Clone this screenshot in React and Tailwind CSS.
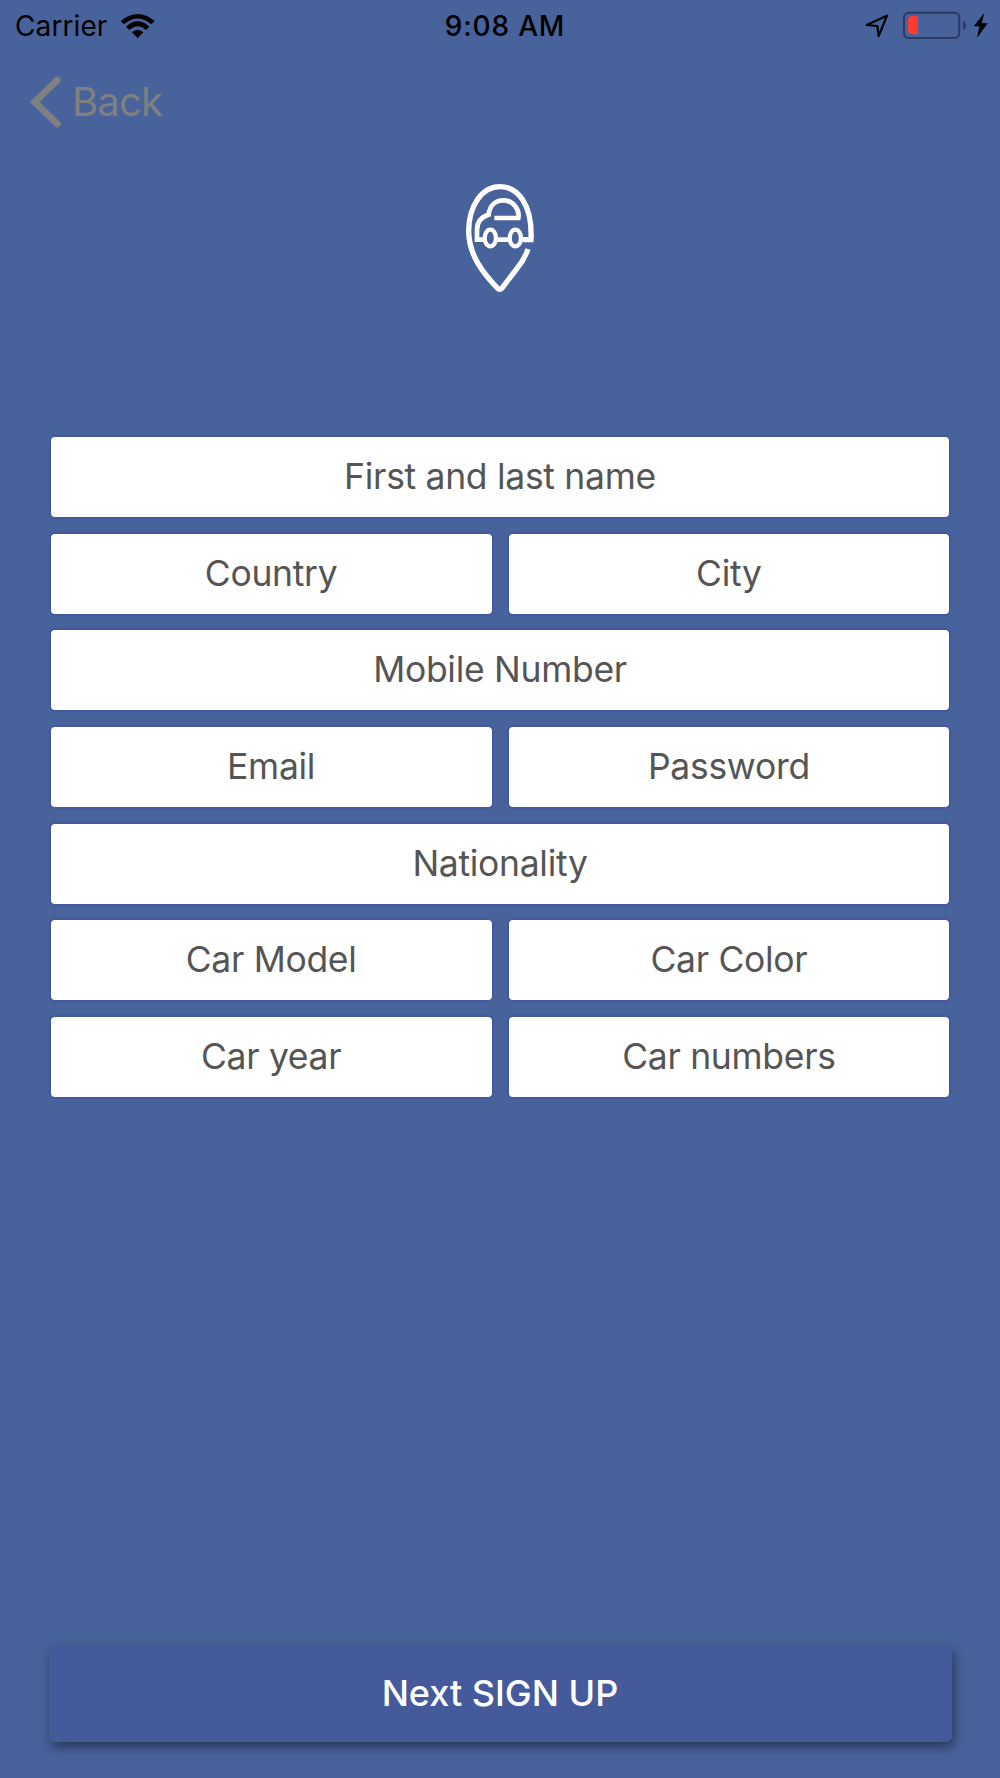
import { useState } from "react";

const rows = [
  ["First and last name"],
  ["Country", "City"],
  ["Mobile Number"],
  ["Email", "Password"],
  ["Nationality"],
  ["Car Model", "Car Color"],
  ["Car year", "Car numbers"],
];

function StatusBar() {
  return (
    <div className="h-[50px] grid grid-cols-3 items-center text-[28px] leading-[50px] text-black">
      <div className="flex items-center pl-[15px]">
        <span className="w-[93px] pt-px tracking-[0.1px] whitespace-nowrap">Carrier</span>
        <svg className="ml-[12px] w-[36px] h-[26px]" viewBox="0 0 108 78">
          <path d="M2 24 Q53 -18 104 24 L94 34 Q53 -1 12 34 Z" />
          <path d="M18 41 Q53 9 88 41 L78 51 Q53 28 28 51 Z" />
          <path d="M36 58 Q53 44 70 58 L53 75 Z" />
        </svg>
      </div>
      <div className="text-center font-medium whitespace-nowrap pl-[10px] pt-px tracking-[0.8px]">9:08 AM</div>
      <div className="flex items-center justify-end pr-[9px]">
        <svg className="w-[126px] h-[50px]" viewBox="75 0 378 150">
          <path d="M80 72 L141 44 L116 105 L112 75 Z" fill="none" stroke="#000" strokeWidth="6.5" strokeLinejoin="round" />
          <rect x="192" y="35" width="166" height="76" rx="14" fill="none" stroke="#2c3b5f" strokeWidth="6" />
          <path d="M217 45 H234 V100 H217 Q204 100 204 87 V58 Q204 45 217 45 Z" fill="#ff3b30" />
          <path d="M369 58 Q378 63 378 73 Q378 83 369 88 Z" fill="#2c3b5f" />
          <path d="M433 36 L401 76 L418 76 L411 111 L443 67 L425 67 Z" />
        </svg>
      </div>
    </div>
  );
}

function Logo() {
  return (
    <svg className="w-[100px] h-[130px] mx-auto" viewBox="0 0 300 390" fill="none" stroke="#fff">
      <path
        d="M234 237 C227 258 214 280 199 298 L156 354 Q149 362 142 354 C104 315 56 258 56 182 C57 105 97 50 150 50 C204 50 248 105 243 209 L218 209"
        strokeWidth="16"
      />
      <path
        d="M133 144 H205 C210 118 189 91 160 91 C137 91 119 106 116 134 C95 140 81 155 81 180 V209 H102 M140 209 H176"
        strokeWidth="14"
      />
      <ellipse cx="121" cy="204" rx="17" ry="25" strokeWidth="13" />
      <ellipse cx="196" cy="204" rx="17" ry="25" strokeWidth="13" />
    </svg>
  );
}

function Field({ title, active, onClick }) {
  return (
    <button
      onClick={onClick}
      aria-pressed={active}
      className="flex-1 h-[84px] bg-white border-2 border-[#43599d] rounded-[6px] text-[35.5px] leading-[78px] tracking-[-0.3px] text-[#555555] text-center whitespace-nowrap"
    >
      {title}
    </button>
  );
}

export default function App() {
  let [selected, setSelected] = useState("");

  return (
    <div className="w-full h-[1778px] bg-[#48629b] flex flex-col overflow-hidden font-['Inter','Liberation_Sans',sans-serif]">
      <StatusBar />
      <button className="h-[104px] self-start flex items-center pl-[30px] text-[#808080]">
        <svg className="w-[31px] h-[52px]" viewBox="0 0 93 156">
          <path d="M82 12 L14 78 L82 144" fill="none" stroke="currentColor" strokeWidth="20" strokeLinecap="round" strokeLinejoin="miter" />
        </svg>
        <span className="ml-[11px] text-[40px] font-normal tracking-[-0.8px] leading-[52px]">Back</span>
      </button>
      <div className="mt-4">
        <Logo />
      </div>

      <div className="mt-[135px] px-[48.7px] flex flex-col gap-[12.7px]">
        {rows.map((row) => (
          <div key={row[0]} className="flex gap-[13px]">
            {row.map((title) => (
              <Field key={title} title={title} active={selected == title} onClick={() => setSelected(title)} />
            ))}
          </div>
        ))}
      </div>

      <button className="mt-auto mb-[36px] mx-[48.5px] h-[97px] shrink-0 rounded-[6px] bg-[#455a9b] text-white text-[36px] font-medium pb-px shadow-[2px_5px_12px_rgba(0,0,0,0.45)]">
        Next SIGN UP
      </button>
    </div>
  );
}
